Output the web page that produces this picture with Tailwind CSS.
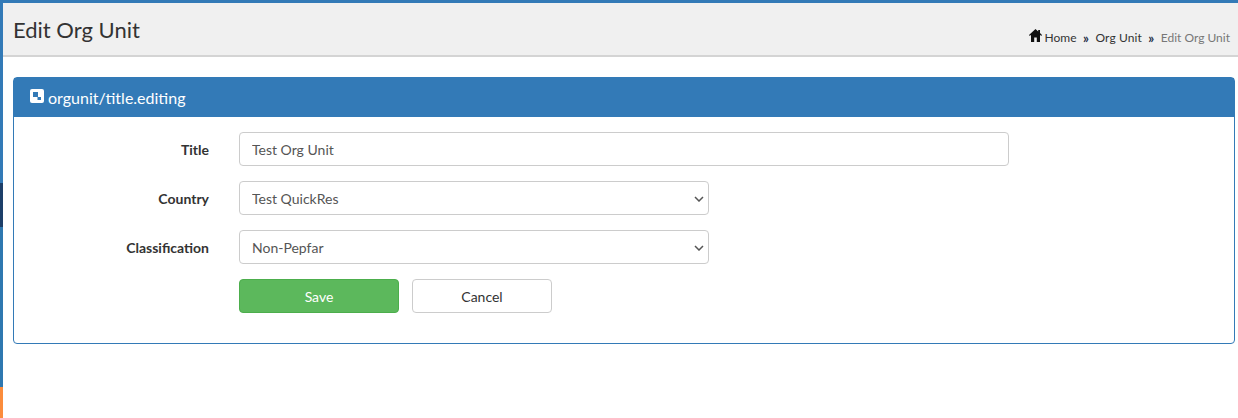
<!DOCTYPE html>
<html lang="en">
  <head>
    <meta charset="UTF-8" />
    <script src="https://cdn.jsdelivr.net/npm/@tailwindcss/browser@4"></script>
    <title>Edit Org Unit</title>
  </head>

  <body class="h-[418px] overflow-hidden bg-white font-['Lato',sans-serif] text-[14px] text-[#333]">
    <!-- Top bar -->
    <div class="h-[3px] bg-[#337ab7]"></div>

    <div class="flex h-[415px]">
      <!-- Sidebar edge -->
      <div class="flex w-[3px] flex-col">
        <div class="h-[180px] bg-[#337ab7]"></div>
        <div class="h-[44px] bg-[#1d3f69]"></div>
        <div class="h-[160px] bg-[#2f78b0]"></div>
        <div class="flex-1 bg-[#fb8c3c]"></div>
      </div>

      <main class="flex-1">
        <!-- Page header -->
        <header class="flex h-[54px] items-start justify-between border-b-2 border-[#d4d4d4] bg-[#f0f0f0] pr-2 pl-[10px]">
          <h1 class="mt-[12px] text-[22px] leading-[30px] font-normal">Edit Org Unit</h1>
          <nav class="mt-[24px] flex items-center text-[12px] leading-[22px]">
            <svg class="mr-[3px] mb-[5px] h-[13px] w-[13px]" viewBox="0 0 13 13" fill="#111">
              <path fill-rule="evenodd" d="M6.500 0 0 6l0.800 0.900L2 5.800V13h3.200V8.500h2.600V13H11V5.800l1.200 1.100L13 6l-2-1.900V1H9.200v1.400z" />
            </svg>
            <a>Home</a>
            <span class="mx-[6.500px] text-[13px] font-bold text-[#1a2a44]">»</span>
            <a class="tracking-[0.1px]">Org Unit</a>
            <span class="mx-[6.500px] text-[13px] font-bold text-[#1a2a44]">»</span>
            <span class="text-[#777]">Edit Org Unit</span>
          </nav>
        </header>

        <!-- Panel -->
        <section class="mt-[20px] mr-[3px] ml-[10px] h-[267px] rounded-[4px] border border-[#337ab7]">
          <div class="flex h-[39px] items-center bg-[#337ab7] pl-[16px] text-[16px] text-white">
            <svg class="mr-[4px] mb-[4px] h-[14px] w-[14px]" viewBox="0 0 14 14">
              <rect width="14" height="14" rx="2" fill="#fff" />
              <rect x="3" y="3" width="5" height="5" fill="#337ab7" />
              <rect x="7.500" y="8" width="3.500" height="3" fill="#337ab7" />
            </svg>
            <span>orgunit/title.editing</span>
          </div>

          <form class="flex flex-col gap-[15px] pt-[15px]">
            <div class="flex items-center">
              <label class="w-[195px] text-right font-bold">Title</label>
              <input
                class="ml-[30px] h-[34px] w-[770px] rounded-[4px] border border-[#ccc] px-3 text-[#555]"
                value="Test Org Unit"
              />
            </div>
            <div class="flex items-center">
              <label class="w-[195px] text-right font-bold">Country</label>
              <div class="relative ml-[30px] w-[470px]">
                <select class="h-[34px] w-full appearance-none rounded-[4px] border border-[#ccc] bg-white px-3 text-[#555]">
                  <option>Test QuickRes</option>
                </select>
                <svg class="pointer-events-none absolute top-[15px] right-[5px] h-[6px] w-[10px]" viewBox="0 0 10 6" fill="none" stroke="#555" stroke-width="1.500">
                  <path d="M1 1l4 4 4-4" />
                </svg>
              </div>
            </div>
            <div class="flex items-center">
              <label class="w-[195px] text-right font-bold">Classification</label>
              <div class="relative ml-[30px] w-[470px]">
                <select class="h-[34px] w-full appearance-none rounded-[4px] border border-[#ccc] bg-white px-3 text-[#555]">
                  <option>Non-Pepfar</option>
                </select>
                <svg class="pointer-events-none absolute top-[15px] right-[5px] h-[6px] w-[10px]" viewBox="0 0 10 6" fill="none" stroke="#555" stroke-width="1.500">
                  <path d="M1 1l4 4 4-4" />
                </svg>
              </div>
            </div>
            <div class="ml-[225px] flex gap-[13px]">
              <button type="button" class="h-[34px] w-[160px] rounded-[4px] border border-[#4cae4c] bg-[#5cb85c] text-white">Save</button>
              <button type="button" class="h-[34px] w-[140px] rounded-[4px] border border-[#ccc] bg-white">Cancel</button>
            </div>
          </form>
        </section>
      </main>
    </div>
  </body>
</html>
